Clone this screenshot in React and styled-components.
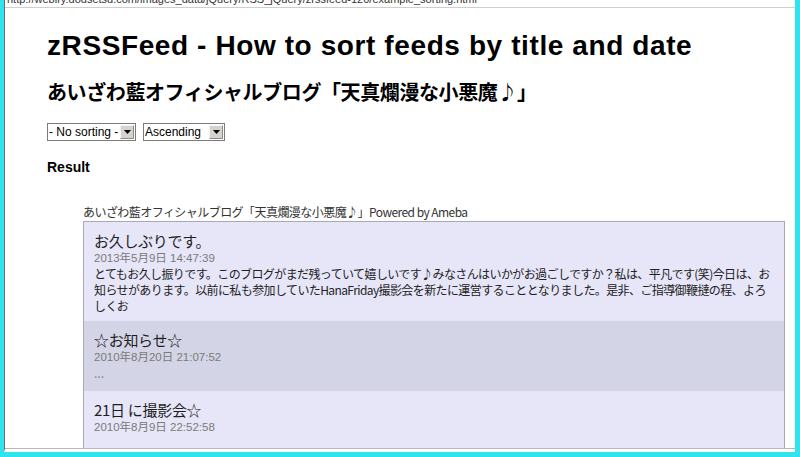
import React from 'react'
import styled, { createGlobalStyle } from 'styled-components';

const GlobalStyle = createGlobalStyle`
    html, body {
        margin : 0;
        padding : 0;
        background : #2fe4ee;
    }
`;

const Frame = styled.div`
    width : 800px;
    height : 457px;
    box-sizing : border-box;
    background : #2fe4ee;
    padding : 0 5px 5px 4px;
    display : flex;
    flex-direction : column;
`;

const Window = styled.div`
    flex : 1;
    display : flex;
    flex-direction : column;
    background : #fff;
    border-left : 1px solid #6c6c6c;
    border-bottom : 3px solid #fff;
    overflow : hidden;
`;

const UrlBar = styled.div`
    height : 7px;
    overflow : hidden;
    border-bottom : 1px solid #cfcfcf;
    font-family : "Liberation Sans", Arial, sans-serif;
    font-size : 11px;
    line-height : 7px;
    color : #333;
    white-space : nowrap;
    padding-left : 2px;
    & span {
        display : block;
        margin-top : -4px;
    }
`;

const Page = styled.div`
    flex : 1;
    overflow : hidden;
    padding : 0 0 0 42px;
    border-bottom : 1px solid #b8b8b8;
    font-family : "Liberation Sans", Arial, "Noto Sans CJK JP", sans-serif;
    color : #000;
`;

const Title = styled.h1`
    margin : 23px 0 0;
    font-size : 28px;
    line-height : 30px;
    font-weight : bold;
    letter-spacing : 0.6px;
`;

const BlogName = styled.h2`
    margin : 17px 0 0;
    font-family : "Noto Sans CJK JP", sans-serif;
    font-size : 20px;
    line-height : 28px;
    font-weight : bold;
    letter-spacing : -0.4px;
`;

const Controls = styled.div`
    margin-top : 17px;
    display : flex;
    gap : 7px;
`;

const SelectBox = styled.div`
    width : ${(props) => props.$w}px;
    height : 18px;
    box-sizing : border-box;
    border : 1px solid #7b7b7b;
    background : #fff;
    display : flex;
    align-items : stretch;
`;

const Select = styled.select`
    appearance : none;
    flex : 1;
    min-width : 0;
    border : none;
    background : transparent;
    padding : 0 0 0 1px;
    margin : 0;
    font-family : "Liberation Sans", Arial, sans-serif;
    font-size : 12px;
    color : #000;
    outline : none;
`;

const Arrow = styled.div`
    width : 14px;
    background : #d6d3ce;
    border : 1px solid #f4f4f4;
    border-right-color : #8a8a8a;
    border-bottom-color : #8a8a8a;
    box-sizing : border-box;
    display : flex;
    align-items : center;
    justify-content : center;
    margin : 1px;
`;

const Result = styled.h3`
    margin : 18px 0 0;
    font-size : 14px;
    line-height : 17px;
    font-weight : bold;
`;

const FeedWrap = styled.div`
    margin : 28px 0 0 36px;
`;

const FeedHeader = styled.div`
    font-family : "Noto Sans CJK JP", sans-serif;
    font-size : 12px;
    line-height : 16px;
    color : #333;
    letter-spacing : -0.55px;
`;

const FeedBox = styled.div`
    margin-top : 1px;
    width : 700px;
    border : 1px solid #a9a9b4;
    background : #e6e6f8;
`;

const Item = styled.div`
    background : ${(props) => props.$alt ? '#d4d4e7' : '#e6e6f8'};
    padding : 10px 4px ${(props) => props.$pb}px 10px;
    font-family : "Noto Sans CJK JP", sans-serif;
`;

const ItemTitle = styled.div`
    font-size : 15px;
    line-height : 18px;
    color : #1e1e1e;
    letter-spacing : -0.3px;
`;

const ItemDate = styled.div`
    font-family : "Liberation Sans", Arial, "Noto Sans CJK JP", sans-serif;
    font-size : 11.5px;
    line-height : 16px;
    color : #7a7a7a;
`;

const ItemBody = styled.div`
    font-size : 12px;
    line-height : 16px;
    color : #222;
    letter-spacing : -0.6px;
    white-space : nowrap;
    & .dots {
        color : #888;
        letter-spacing : 0;
    }
`;

const items = [
    {
        title : "お久しぶりです。",
        date : "2013年5月9日 14:47:39",
        lines : [
            "とてもお久し振りです。このブログがまだ残っていて嬉しいです♪みなさんはいかがお過ごしですか？私は、平凡です(笑)今日は、お",
            "知らせがあります。以前に私も参加していたHanaFriday撮影会を新たに運営することとなりました。是非、ご指導御鞭撻の程、よろ",
            "しくお",
        ],
        pb : 7
    },
    { title : "☆お知らせ☆", date : "2010年8月20日 21:07:52", dots : true, pb : 10 },
    { title : "21日 に撮影会☆", date : "2010年8月9日 22:52:58", pb : 30 },
];

function DropArrow() {
    return (
        <svg width="7" height="4" viewBox="0 0 7 4">
            <path d="M0 0 H7 L3.5 4 Z" fill="#000"/>
        </svg>
    );
}

function App() {
    return (
        <Frame>
            <GlobalStyle/>
            <Window>
                <UrlBar>
                    <span>http://weblry.dodsetsd.com/images_data/jQuery/RSS_jQuery/zrssfeed-120/example_sorting.html</span>
                </UrlBar>
                <Page>
                    <Title>zRSSFeed - How to sort feeds by title and date</Title>
                    <BlogName>あいざわ藍オフィシャルブログ「天真爛漫な小悪魔♪」</BlogName>
                    <Controls>
                        <SelectBox $w={89}>
                            <Select defaultValue="none">
                                <option value="none">- No sorting -</option>
                                <option value="title">Title</option>
                                <option value="date">Date</option>
                            </Select>
                            <Arrow><DropArrow/></Arrow>
                        </SelectBox>
                        <SelectBox $w={82}>
                            <Select defaultValue="asc">
                                <option value="asc">Ascending</option>
                                <option value="desc">Descending</option>
                            </Select>
                            <Arrow><DropArrow/></Arrow>
                        </SelectBox>
                    </Controls>
                    <Result>Result</Result>
                    <FeedWrap>
                        <FeedHeader>あいざわ藍オフィシャルブログ「天真爛漫な小悪魔♪」Powered by Ameba</FeedHeader>
                        <FeedBox>
                            {items.map((item, idx) => (
                                <Item key={idx} $alt={idx % 2 == 1} $pb={item.pb}>
                                    <ItemTitle>{item.title}</ItemTitle>
                                    <ItemDate>{item.date}</ItemDate>
                                    {item.lines && (
                                        <ItemBody>
                                            {item.lines.map((line, i) => <div key={i}>{line}</div>)}
                                        </ItemBody>
                                    )}
                                    {item.dots && (
                                        <ItemBody><span className="dots">...</span></ItemBody>
                                    )}
                                </Item>
                            ))}
                        </FeedBox>
                    </FeedWrap>
                </Page>
            </Window>
        </Frame>
    )
}

export default App
